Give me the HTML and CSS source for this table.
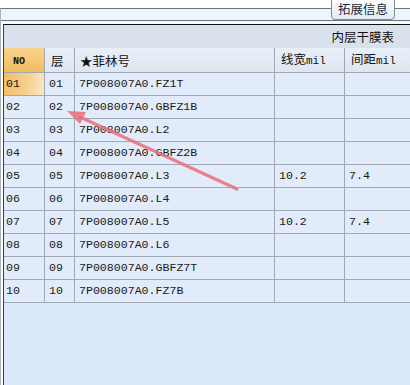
FILE: index.html
```html
<!DOCTYPE html>
<html>
<head>
<meta charset="utf-8">
<link rel="stylesheet" href="styles.css">
</head>
<body>
<div class="frame">
  <div class="strip"></div>
  <div class="gap"></div>
  <div class="grid">
    <table class="tbl">
      <colgroup>
        <col class="c-no"><col class="c-layer"><col class="c-film"><col class="c-w"><col class="c-s">
      </colgroup>
      <tr class="title"><td colspan="5">内层干膜表</td></tr>
      <tr class="head">
        <td class="no-h"><span class="mono">NO</span></td>
        <td class="h-layer">层</td>
        <td class="h-film">★菲林号</td>
        <td class="h-w">线宽<span class="mono">mil</span></td>
        <td class="h-s">间距<span class="mono">mil</span></td>
      </tr>
      <tr class="row"><td class="no sel">01</td><td>01</td><td>7P008007A0.FZ1T</td><td></td><td></td></tr>
      <tr class="row"><td class="no">02</td><td>02</td><td>7P008007A0.GBFZ1B</td><td></td><td></td></tr>
      <tr class="row"><td class="no">03</td><td>03</td><td>7P008007A0.L2</td><td></td><td></td></tr>
      <tr class="row"><td class="no">04</td><td>04</td><td>7P008007A0.GBFZ2B</td><td></td><td></td></tr>
      <tr class="row"><td class="no">05</td><td>05</td><td>7P008007A0.L3</td><td>10.2</td><td>7.4</td></tr>
      <tr class="row"><td class="no">06</td><td>06</td><td>7P008007A0.L4</td><td></td><td></td></tr>
      <tr class="row"><td class="no">07</td><td>07</td><td>7P008007A0.L5</td><td>10.2</td><td>7.4</td></tr>
      <tr class="row"><td class="no">08</td><td>08</td><td>7P008007A0.L6</td><td></td><td></td></tr>
      <tr class="row"><td class="no">09</td><td>09</td><td>7P008007A0.GBFZ7T</td><td></td><td></td></tr>
      <tr class="row"><td class="no">10</td><td>10</td><td>7P008007A0.FZ7B</td><td></td><td></td></tr>
    </table>
  </div>
</div>
<div class="tab">拓展信息</div>
<svg class="arrow" width="410" height="385" viewBox="0 0 410 385">
  <line x1="237" y1="189" x2="80" y2="117" stroke="#e8707a" stroke-opacity="0.85" stroke-width="3.2" stroke-linecap="round"/>
  <polygon points="67,111 86,112 80,124" fill="#e8707a" fill-opacity="0.85"/>
</svg>
</body>
</html>
```
FILE: styles.css
```css
html, body {
  margin: 0;
  padding: 0;
}
body {
  width: 410px;
  height: 385px;
  overflow: hidden;
  background: #ffffff;
  position: relative;
  font-family: "Noto Sans CJK SC", sans-serif;
  font-size: 12px;
  color: #111;
}
.frame {
  margin-top: 8px;
  height: 377px;
  border-top: 1px solid #6b7480;
  border-left: 1px solid #aab2bc;
  display: flex;
  flex-direction: column;
}
.strip {
  height: 11px;
  background: #eef4fc;
  border-bottom: 1px solid #6b7480;
}
.gap {
  height: 3px;
  background: #f7f9fc;
}
.grid {
  flex: 1;
  margin-left: 2px;
  border-top: 1px solid #111;
  border-left: 1px solid #3a3f46;
  background: #dbe9fc;
  overflow: hidden;
}
.tbl {
  border-collapse: separate;
  border-spacing: 0;
  table-layout: fixed;
  width: 406px;
}
.c-no { width: 41px; }
.c-layer { width: 30px; }
.c-film { width: 200px; }
.c-w { width: 70px; }
.c-s { width: 65px; }
.tbl td {
  padding: 0;
  white-space: nowrap;
  overflow: hidden;
}
.title td {
  height: 23px;
  background: #d9e1ec;
  text-align: right;
  padding-right: 16px;
  font-size: 12.5px;
  line-height: 23px;
  color: #111;
}
.head td {
  height: 21px;
  line-height: 21px;
  background: linear-gradient(#e9eff7, #dee6f1);
  border-right: 1px solid #9fa8b5;
  border-bottom: 1px solid #9fa8b5;
  font-size: 12.5px;
}
.head td.no-h {
  background: linear-gradient(#f8d48e, #f2bb5d);
  padding-left: 9px;
  font-weight: bold;
}
.head td.no-h .mono {
  font-size: 10px;
}
.h-layer { padding-left: 6px !important; }
.h-film { padding-left: 5px !important; }
.h-w { padding-left: 6px !important; }
.h-s { padding-left: 6px !important; }
.mono {
  font-family: "Liberation Mono", "DejaVu Sans Mono", monospace;
  font-size: 11px;
}
.row td {
  height: 22px;
  line-height: 22px;
  background: #e1ebf9;
  border-right: 1px solid #9fa8b5;
  border-bottom: 1px solid #9fa8b5;
  padding-left: 4px;
  font-family: "Liberation Mono", "DejaVu Sans Mono", monospace;
  font-size: 11.6px;
  color: #1a1a1a;
}
.tbl tr td:last-child {
  border-right: none;
}
.title td:last-child {
  padding-right: 16px;
}
.row td.no {
  padding-left: 2px;
}
.row td.sel {
  background: linear-gradient(100deg, #f4bd63 0%, #f6cf8d 55%, #fbe8c6 100%);
}
.tab {
  position: absolute;
  left: 331px;
  top: -3px;
  width: 62px;
  height: 21px;
  border: 1px solid #7d8a9c;
  border-radius: 0 0 4px 4px;
  background: linear-gradient(#fdfeff, #e3eaf3);
  text-align: center;
  line-height: 22px;
  font-size: 12.5px;
  color: #1e2a3a;
}
.arrow {
  position: absolute;
  left: 0;
  top: 0;
  pointer-events: none;
}
```
